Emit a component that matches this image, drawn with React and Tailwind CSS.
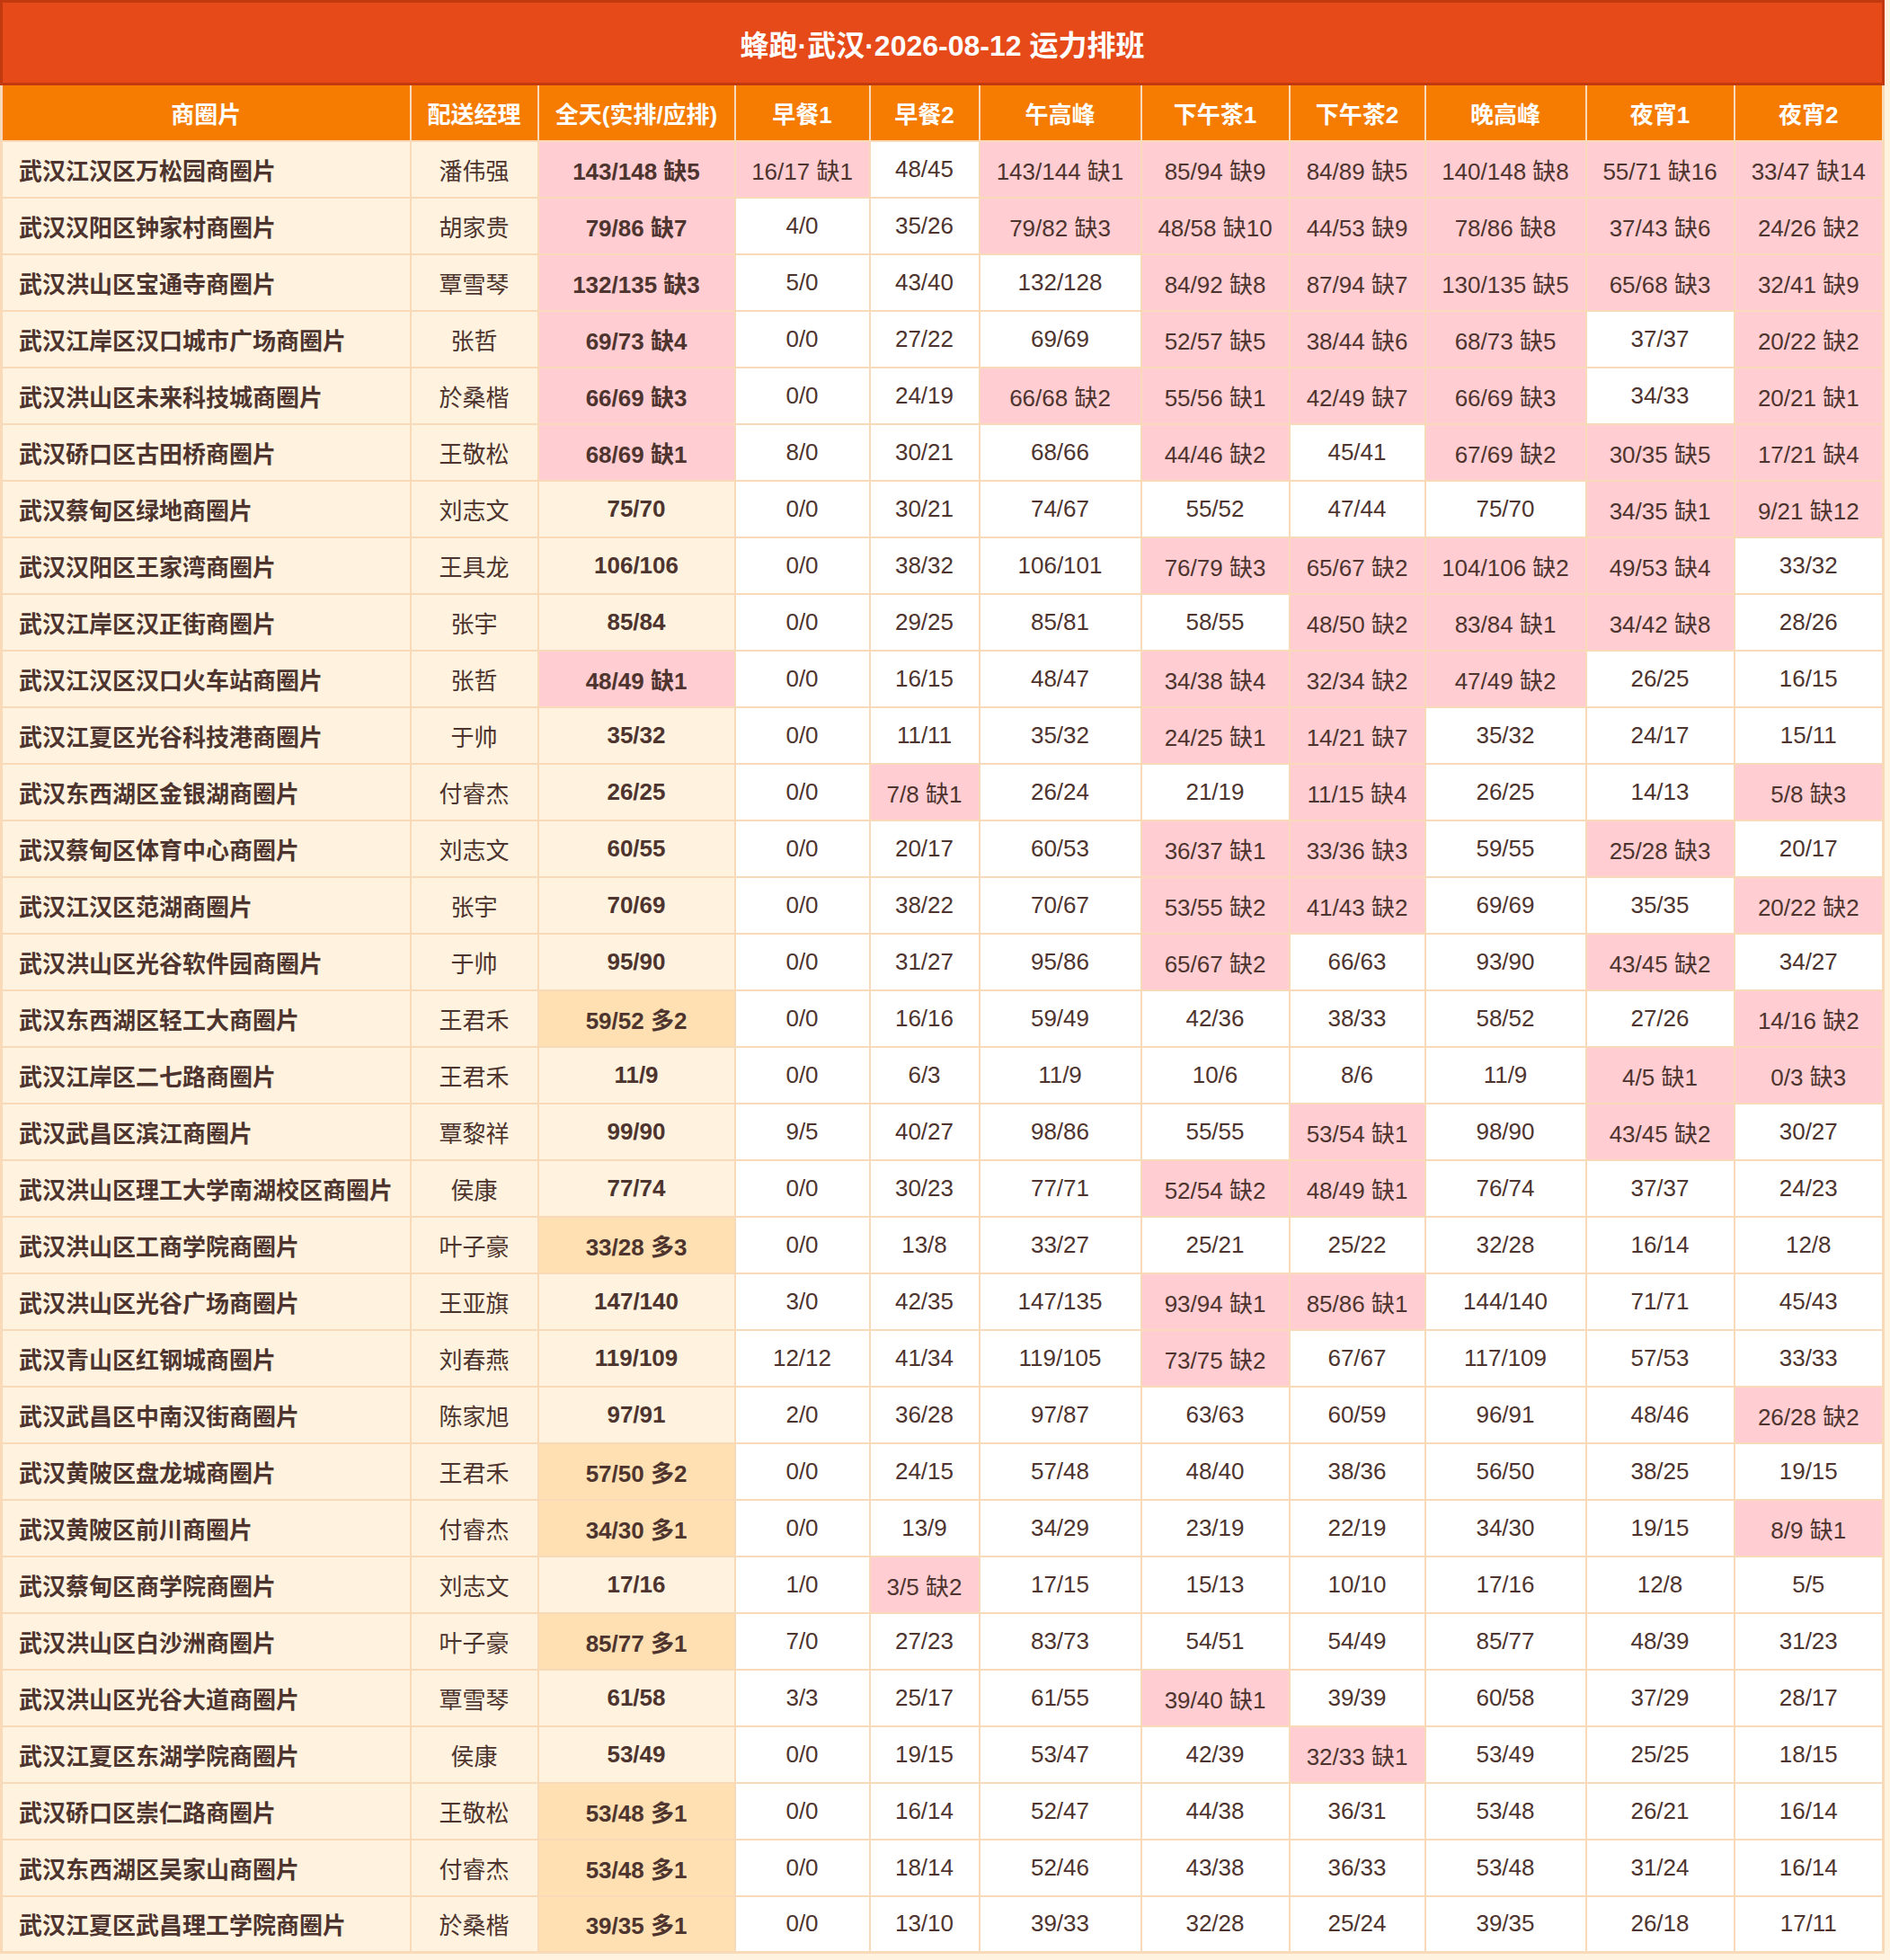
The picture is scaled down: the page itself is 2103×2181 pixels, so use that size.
// 运力排班表 — one row per 商圈片, one column per time slot
const FONT = { fontFamily: '"Liberation Sans", "Noto Sans CJK SC", sans-serif' }

const COLUMNS = [
  { label: '商圈片', width: 455 },
  { label: '配送经理', width: 142 },
  { label: '全天(实排/应排)', width: 219 },
  { label: '早餐1', width: 150 },
  { label: '早餐2', width: 122 },
  { label: '午高峰', width: 180 },
  { label: '下午茶1', width: 165 },
  { label: '下午茶2', width: 151 },
  { label: '晚高峰', width: 179 },
  { label: '夜宵1', width: 165 },
  { label: '夜宵2', width: 166 },
]

const ROWS = [
  ['武汉江汉区万松园商圈片', '潘伟强', '143/148 缺5', '16/17 缺1', '48/45', '143/144 缺1', '85/94 缺9', '84/89 缺5', '140/148 缺8', '55/71 缺16', '33/47 缺14'],
  ['武汉汉阳区钟家村商圈片', '胡家贵', '79/86 缺7', '4/0', '35/26', '79/82 缺3', '48/58 缺10', '44/53 缺9', '78/86 缺8', '37/43 缺6', '24/26 缺2'],
  ['武汉洪山区宝通寺商圈片', '覃雪琴', '132/135 缺3', '5/0', '43/40', '132/128', '84/92 缺8', '87/94 缺7', '130/135 缺5', '65/68 缺3', '32/41 缺9'],
  ['武汉江岸区汉口城市广场商圈片', '张哲', '69/73 缺4', '0/0', '27/22', '69/69', '52/57 缺5', '38/44 缺6', '68/73 缺5', '37/37', '20/22 缺2'],
  ['武汉洪山区未来科技城商圈片', '於桑楷', '66/69 缺3', '0/0', '24/19', '66/68 缺2', '55/56 缺1', '42/49 缺7', '66/69 缺3', '34/33', '20/21 缺1'],
  ['武汉硚口区古田桥商圈片', '王敬松', '68/69 缺1', '8/0', '30/21', '68/66', '44/46 缺2', '45/41', '67/69 缺2', '30/35 缺5', '17/21 缺4'],
  ['武汉蔡甸区绿地商圈片', '刘志文', '75/70', '0/0', '30/21', '74/67', '55/52', '47/44', '75/70', '34/35 缺1', '9/21 缺12'],
  ['武汉汉阳区王家湾商圈片', '王具龙', '106/106', '0/0', '38/32', '106/101', '76/79 缺3', '65/67 缺2', '104/106 缺2', '49/53 缺4', '33/32'],
  ['武汉江岸区汉正街商圈片', '张宇', '85/84', '0/0', '29/25', '85/81', '58/55', '48/50 缺2', '83/84 缺1', '34/42 缺8', '28/26'],
  ['武汉江汉区汉口火车站商圈片', '张哲', '48/49 缺1', '0/0', '16/15', '48/47', '34/38 缺4', '32/34 缺2', '47/49 缺2', '26/25', '16/15'],
  ['武汉江夏区光谷科技港商圈片', '于帅', '35/32', '0/0', '11/11', '35/32', '24/25 缺1', '14/21 缺7', '35/32', '24/17', '15/11'],
  ['武汉东西湖区金银湖商圈片', '付睿杰', '26/25', '0/0', '7/8 缺1', '26/24', '21/19', '11/15 缺4', '26/25', '14/13', '5/8 缺3'],
  ['武汉蔡甸区体育中心商圈片', '刘志文', '60/55', '0/0', '20/17', '60/53', '36/37 缺1', '33/36 缺3', '59/55', '25/28 缺3', '20/17'],
  ['武汉江汉区范湖商圈片', '张宇', '70/69', '0/0', '38/22', '70/67', '53/55 缺2', '41/43 缺2', '69/69', '35/35', '20/22 缺2'],
  ['武汉洪山区光谷软件园商圈片', '于帅', '95/90', '0/0', '31/27', '95/86', '65/67 缺2', '66/63', '93/90', '43/45 缺2', '34/27'],
  ['武汉东西湖区轻工大商圈片', '王君禾', '59/52 多2', '0/0', '16/16', '59/49', '42/36', '38/33', '58/52', '27/26', '14/16 缺2'],
  ['武汉江岸区二七路商圈片', '王君禾', '11/9', '0/0', '6/3', '11/9', '10/6', '8/6', '11/9', '4/5 缺1', '0/3 缺3'],
  ['武汉武昌区滨江商圈片', '覃黎祥', '99/90', '9/5', '40/27', '98/86', '55/55', '53/54 缺1', '98/90', '43/45 缺2', '30/27'],
  ['武汉洪山区理工大学南湖校区商圈片', '侯康', '77/74', '0/0', '30/23', '77/71', '52/54 缺2', '48/49 缺1', '76/74', '37/37', '24/23'],
  ['武汉洪山区工商学院商圈片', '叶子豪', '33/28 多3', '0/0', '13/8', '33/27', '25/21', '25/22', '32/28', '16/14', '12/8'],
  ['武汉洪山区光谷广场商圈片', '王亚旗', '147/140', '3/0', '42/35', '147/135', '93/94 缺1', '85/86 缺1', '144/140', '71/71', '45/43'],
  ['武汉青山区红钢城商圈片', '刘春燕', '119/109', '12/12', '41/34', '119/105', '73/75 缺2', '67/67', '117/109', '57/53', '33/33'],
  ['武汉武昌区中南汉街商圈片', '陈家旭', '97/91', '2/0', '36/28', '97/87', '63/63', '60/59', '96/91', '48/46', '26/28 缺2'],
  ['武汉黄陂区盘龙城商圈片', '王君禾', '57/50 多2', '0/0', '24/15', '57/48', '48/40', '38/36', '56/50', '38/25', '19/15'],
  ['武汉黄陂区前川商圈片', '付睿杰', '34/30 多1', '0/0', '13/9', '34/29', '23/19', '22/19', '34/30', '19/15', '8/9 缺1'],
  ['武汉蔡甸区商学院商圈片', '刘志文', '17/16', '1/0', '3/5 缺2', '17/15', '15/13', '10/10', '17/16', '12/8', '5/5'],
  ['武汉洪山区白沙洲商圈片', '叶子豪', '85/77 多1', '7/0', '27/23', '83/73', '54/51', '54/49', '85/77', '48/39', '31/23'],
  ['武汉洪山区光谷大道商圈片', '覃雪琴', '61/58', '3/3', '25/17', '61/55', '39/40 缺1', '39/39', '60/58', '37/29', '28/17'],
  ['武汉江夏区东湖学院商圈片', '侯康', '53/49', '0/0', '19/15', '53/47', '42/39', '32/33 缺1', '53/49', '25/25', '18/15'],
  ['武汉硚口区崇仁路商圈片', '王敬松', '53/48 多1', '0/0', '16/14', '52/47', '44/38', '36/31', '53/48', '26/21', '16/14'],
  ['武汉东西湖区吴家山商圈片', '付睿杰', '53/48 多1', '0/0', '18/14', '52/46', '43/38', '36/33', '53/48', '31/24', '16/14'],
  ['武汉江夏区武昌理工学院商圈片', '於桑楷', '39/35 多1', '0/0', '13/10', '39/33', '32/28', '25/24', '39/35', '26/18', '17/11'],
]

// 缺 → pink, 多 → orange, otherwise the column's base colour
function cellBg(text, base) {
  if (text.includes('缺')) return 'bg-[#ffcdd2]'
  if (text.includes('多')) return 'bg-[#ffe0b2]'
  return base
}

function BodyRow({ row }) {
  const [name, manager, total, ...slots] = row
  return (
    <tr>
      <td className="h-[63px] border-2 border-[#f8d9b8] bg-[#fff3e0] pl-[18px] text-left font-bold whitespace-nowrap">
        {name}
      </td>
      <td className="border-2 border-[#f8d9b8] bg-[#fff3e0] text-center whitespace-nowrap">{manager}</td>
      <td className={`border-2 border-[#f8d9b8] ${cellBg(total, 'bg-[#fff3e0]')} text-center font-bold whitespace-nowrap`}>
        {total}
      </td>
      {slots.map((s, i) => (
        <td key={i} className={`border-2 border-[#f8d9b8] ${cellBg(s, 'bg-white')} text-center whitespace-nowrap`}>
          {s}
        </td>
      ))}
    </tr>
  )
}

export default function App() {
  return (
    <div className="min-h-screen bg-[#fff3e0] text-[#4e342e]" style={FONT}>
      <table className="w-[2096px] table-fixed border-collapse border-[3px] border-[#f8d9b8] text-[26px] leading-[normal]">
        <colgroup>
          {COLUMNS.map(c => (
            <col key={c.label} style={{ width: c.width }} />
          ))}
        </colgroup>
        <thead>
          {/* ── Title ───────────────────────────────────────────── */}
          <tr>
            <th
              colSpan={COLUMNS.length}
              className="h-[92px] border-[3px] border-[#c3390f] bg-[#e64a19] text-center text-[32px] font-bold text-white"
            >
              蜂跑·武汉·2026-08-12 运力排班
            </th>
          </tr>
          {/* ── Column headers ──────────────────────────────────── */}
          <tr>
            {COLUMNS.map(c => (
              <th
                key={c.label}
                className="h-[63px] border-2 border-[#f8d9b8] bg-[#f57c00] text-center font-bold whitespace-nowrap text-white"
              >
                {c.label}
              </th>
            ))}
          </tr>
        </thead>
        <tbody>
          {ROWS.map(r => (
            <BodyRow key={r[0]} row={r} />
          ))}
        </tbody>
      </table>
    </div>
  )
}
